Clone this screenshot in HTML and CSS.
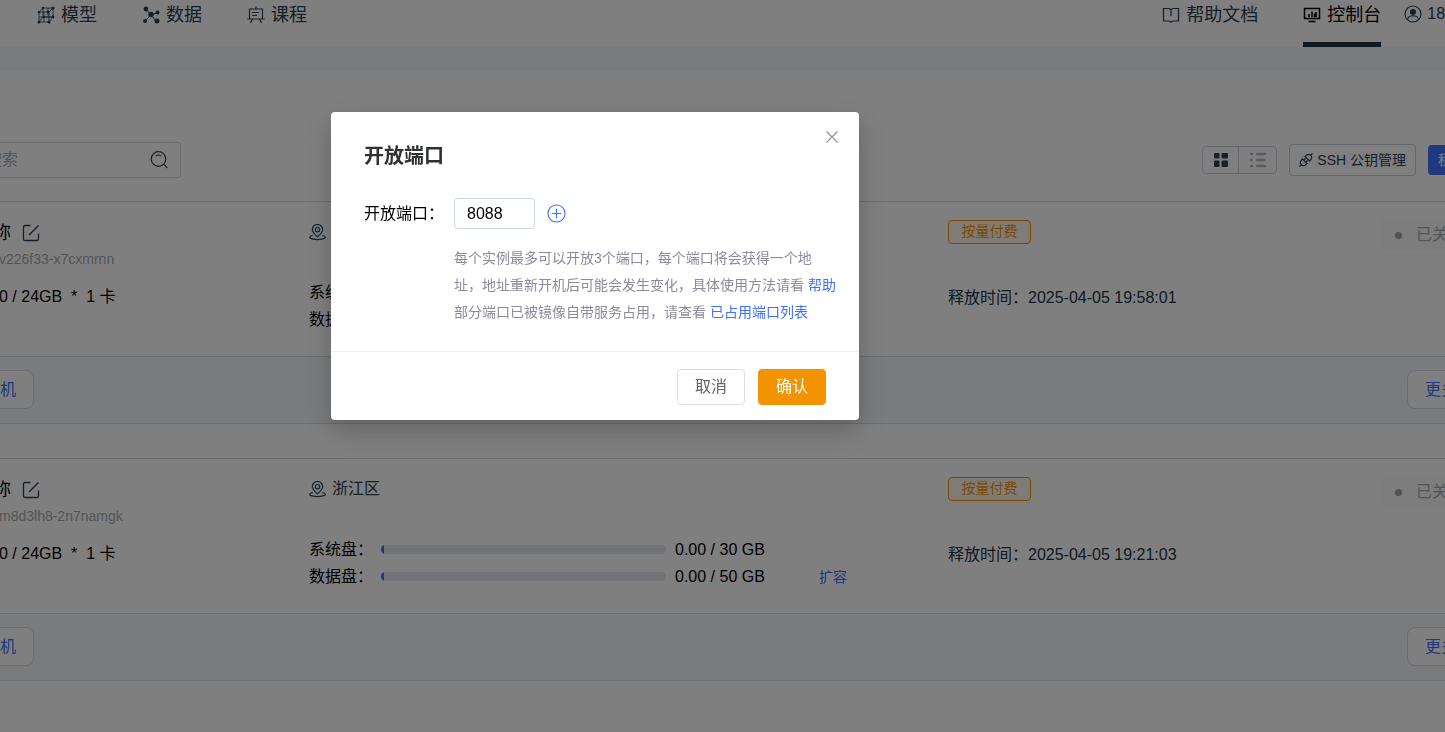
FILE: index.html
```
<!DOCTYPE html>
<html lang="zh-CN">
<head>
    <meta charset="UTF-8">
    <meta name="viewport" content="width=device-width, initial-scale=1.0">
    <title>控制台</title>
    <link rel="stylesheet" href="styles.css">
</head>
<body>
    <div class="page">
        <header class="header">
            <nav class="nav">
                <a href="#" class="nav-link">
                    <svg class="icon" viewBox="0 0 18 18"><path d="M2 6h10v10H2zM6 2h10v9H6zM2 6l4-4M12 6l4-4M2 16l4-5M12 16l4-5M2 11h14M7 6v10M11 2v9" fill="none" stroke="currentColor" stroke-width=".8"/><g fill="currentColor"><circle cx="2" cy="6" r="1.3"/><circle cx="6" cy="2" r="1.3"/><circle cx="16" cy="2" r="1.6"/><circle cx="11" cy="6" r="1.5"/><circle cx="2" cy="16" r="1.5"/><circle cx="12" cy="16" r="1.6"/><circle cx="16" cy="11" r="1.4"/><circle cx="7" cy="11" r="1.1"/></g></svg>
                    <span>模型</span>
                </a>
                <a href="#" class="nav-link">
                    <svg class="icon" viewBox="0 0 18 18"><path d="M4 3l5 6M9 9l6-2M9 9l-6 6M9 9l5 6" fill="none" stroke="currentColor"/><g fill="currentColor"><circle cx="4" cy="3" r="2.4"/><circle cx="9" cy="8.500" r="2.700"/><circle cx="15.500" cy="6.500" r="2"/><circle cx="3" cy="15" r="2"/><circle cx="15" cy="15" r="2.500"/></g></svg>
                    <span>数据</span>
                </a>
                <a href="#" class="nav-link">
                    <svg class="icon" viewBox="0 0 18 18"><path d="M2.500 13V3h13v10M.5 13h17M9 .5V3M5 6.500h7M5 9.500h5M5.500 13l-2 4M12.500 13l2 4" fill="none" stroke="currentColor" stroke-width="1.200"/></svg>
                    <span>课程</span>
                </a>
            </nav>
            <div class="header-right">
                <a href="#" class="nav-link">
                    <svg class="icon" viewBox="0 0 18 18"><path d="M1.500 2.500h5.500l2 1 2-1h5.500v12.500H11l-2 1-2-1H1.500zM9 3.500V10" fill="none" stroke="currentColor" stroke-width="1.200"/></svg>
                    <span>帮助文档</span>
                </a>
                <a href="#" class="nav-link active">
                    <svg class="icon" viewBox="0 0 18 18"><path d="M1.500 2.500h15v10h-15zM5.500 15.500h7M6 8v3M9 5.500V11M11.500 7.500V11M13 6v5" fill="none" stroke="currentColor" stroke-width="1.500"/></svg>
                    <span>控制台</span>
                </a>
                <a href="#" class="account">
                    <svg class="icon" viewBox="0 0 18 18"><circle cx="9" cy="9" r="8" fill="none" stroke="currentColor" stroke-width="1.200"/><circle cx="9" cy="7" r="3" fill="currentColor"/><path d="M3.500 14.500c1-5 10-5 11 0" fill="none" stroke="currentColor" stroke-width="1.200"/></svg>
                    <span>182</span>
                </a>
            </div>
        </header>

        <main class="main">
            <div class="toolbar">
                <div class="search">
                    <input type="text" class="search-input" placeholder="搜索" aria-label="搜索">
                    <button type="button" class="icon-btn" aria-label="搜索按钮">
                        <svg class="icon" viewBox="0 0 18 18"><circle cx="8.500" cy="8" r="7.300" fill="none" stroke="currentColor" stroke-width="1.200"/><path d="M6 5c1.500-1.200 3.500-1.200 5 0M13.800 13.300l3.500 3.700" fill="none" stroke="currentColor" stroke-width="1.200"/></svg>
                    </button>
                </div>
                <div class="tools">
                    <div class="view-switch">
                        <button type="button" class="view-btn active" aria-label="卡片视图">
                            <svg class="icon-view" viewBox="0 0 16 16"><path d="M2 1h3.500q1 0 1 1v4.500H2q-1 0-1-1V2q0-1 1-1zM9.500 1H14q1 0 1 1v3.500q0 1-1 1H9.500q-1 0-1-1V2q0-1 1-1zM2 8.500h3.500q1 0 1 1V14q0 1-1 1H2q-1 0-1-1V9.500q0-1 1-1zM9.500 8.500H14q1 0 1 1V14q0 1-1 1H9.500q-1 0-1-1V9.500q0-1 1-1z" fill="currentColor"/></svg>
                        </button>
                        <button type="button" class="view-btn" aria-label="列表视图">
                            <svg class="icon-view" viewBox="0 0 16 16"><path d="M1 2h1M7 2h8M1 8h1M7 8h8M1 14h1M7 14h8" stroke="currentColor" stroke-width="2.400" stroke-linecap="round"/></svg>
                        </button>
                    </div>
                    <button type="button" class="ssh-btn">
                        <svg class="icon-small" viewBox="0 0 14 14"><path d="M.5 13.500l2-2M11.500 2.500l2-2M3.500 6l4.500 4.500-1.500 1.500c-3 2-6.500-1.500-4.500-4.500zM6 3.500L10.500 8 12 6.500C14 3.500 10.500 0 7.500 2zM4.500 7.500l2-2M6.500 9.500l2-2" fill="none" stroke="currentColor" stroke-width="1.200"/></svg>
                        <span>SSH 公钥管理</span>
                    </button>
                    <button type="button" class="rent-btn">租用</button>
                </div>
            </div>

            <section class="card">
                <div class="card-body">
                    <div class="info">
                        <div class="name">
                            <span>名称</span>
                            <button type="button" class="icon-btn" aria-label="修改名称">
                                <svg class="icon" viewBox="0 0 18 18"><path d="M8.500 1.500H3q-1.500 0-1.500 1.500v12q0 1.500 1.500 1.500h12q1.500 0 1.500-1.500V9.500M7 11l9.500-9.500" fill="none" stroke="currentColor" stroke-width="1.300"/></svg>
                            </button>
                        </div>
                        <div class="instance-id">v226f33-x7cxmrnn</div>
                        <div class="spec">0 / 24GB &nbsp;*&nbsp; 1 卡</div>
                    </div>
                    <div class="storage">
                        <div class="region">
                            <svg class="icon-region" viewBox="0 0 18 18"><path d="M9 13.500C5.500 10.500 3.500 8.500 3.500 6a5.500 5.500 0 0 1 11 0c0 2.500-2 4.500-5.500 7.500zM4 12c-7 2.500-1.500 4.500 5 4.500s12-2 5-4.500" fill="none" stroke="currentColor" stroke-width="1.200"/><circle cx="9" cy="6" r="2.300" fill="none" stroke="currentColor" stroke-width="1.200"/></svg>
                            <span>浙江区</span>
                        </div>
                        <div class="disks">
                            <div class="disk">
                                <span class="disk-label">系统盘：</span>
                                <div class="bar"><div class="bar-fill" style="width: 1%"></div></div>
                                <span class="disk-size">0.00 / 30 GB</span>
                            </div>
                            <div class="disk">
                                <span class="disk-label">数据盘：</span>
                                <div class="bar"><div class="bar-fill" style="width: 1%"></div></div>
                                <span class="disk-size">0.00 / 50 GB</span>
                                <a href="#" class="expand">扩容</a>
                            </div>
                        </div>
                    </div>
                    <div class="billing">
                        <span class="tag">按量付费</span>
                        <div class="release">释放时间：2025-04-05 19:58:01</div>
                    </div>
                    <div class="status"><span class="dot"></span>已关机</div>
                </div>
                <div class="card-footer">
                    <button type="button" class="action-btn">开机</button>
                    <button type="button" class="action-btn more-btn">更多</button>
                </div>
            </section>

            <section class="card">
                <div class="card-body">
                    <div class="info">
                        <div class="name">
                            <span>名称</span>
                            <button type="button" class="icon-btn" aria-label="修改名称">
                                <svg class="icon" viewBox="0 0 18 18"><path d="M8.500 1.500H3q-1.500 0-1.500 1.500v12q0 1.500 1.500 1.500h12q1.500 0 1.500-1.500V9.500M7 11l9.500-9.500" fill="none" stroke="currentColor" stroke-width="1.300"/></svg>
                            </button>
                        </div>
                        <div class="instance-id">m8d3lh8-2n7namgk</div>
                        <div class="spec">0 / 24GB &nbsp;*&nbsp; 1 卡</div>
                    </div>
                    <div class="storage">
                        <div class="region">
                            <svg class="icon-region" viewBox="0 0 18 18"><path d="M9 13.500C5.500 10.500 3.500 8.500 3.500 6a5.500 5.500 0 0 1 11 0c0 2.500-2 4.500-5.500 7.500zM4 12c-7 2.500-1.500 4.500 5 4.500s12-2 5-4.500" fill="none" stroke="currentColor" stroke-width="1.200"/><circle cx="9" cy="6" r="2.300" fill="none" stroke="currentColor" stroke-width="1.200"/></svg>
                            <span>浙江区</span>
                        </div>
                        <div class="disks">
                            <div class="disk">
                                <span class="disk-label">系统盘：</span>
                                <div class="bar"><div class="bar-fill" style="width: 1%"></div></div>
                                <span class="disk-size">0.00 / 30 GB</span>
                            </div>
                            <div class="disk">
                                <span class="disk-label">数据盘：</span>
                                <div class="bar"><div class="bar-fill" style="width: 1%"></div></div>
                                <span class="disk-size">0.00 / 50 GB</span>
                                <a href="#" class="expand">扩容</a>
                            </div>
                        </div>
                    </div>
                    <div class="billing">
                        <span class="tag">按量付费</span>
                        <div class="release">释放时间：2025-04-05 19:21:03</div>
                    </div>
                    <div class="status"><span class="dot"></span>已关机</div>
                </div>
                <div class="card-footer">
                    <button type="button" class="action-btn">开机</button>
                    <button type="button" class="action-btn more-btn">更多</button>
                </div>
            </section>
        </main>
    </div>

    <div class="overlay">
        <div class="dialog" role="dialog" aria-labelledby="dialog-title">
            <div class="dialog-header">
                <h2 class="dialog-title" id="dialog-title">开放端口</h2>
                <button type="button" class="close-btn" aria-label="关闭">
                    <svg class="icon-close" viewBox="0 0 12 12"><path d="M.5.5l11 11M11.500.5l-11 11" stroke="currentColor" stroke-width="1.100"/></svg>
                </button>
            </div>
            <div class="dialog-body">
                <div class="form-row">
                    <label class="form-label" for="port">开放端口：</label>
                    <input type="text" class="port-input" id="port" value="8088">
                    <button type="button" class="add-btn" aria-label="添加端口">
                        <svg class="icon-add" viewBox="0 0 20 20"><circle cx="10" cy="10" r="9" fill="none" stroke="currentColor" stroke-width="1.200"/><path d="M10 5v10M5 10h10" stroke="currentColor" stroke-width="1.200"/></svg>
                    </button>
                </div>
                <div class="tips">
                    <div>每个实例最多可以开放3个端口，每个端口将会获得一个地</div>
                    <div><span>址，地址重新开机后可能会发生变化，具体使用方法请看</span> <a href="#">帮助</a></div>
                    <div><span>部分端口已被镜像自带服务占用，请查看</span> <a href="#">已占用端口列表</a></div>
                </div>
            </div>
            <div class="dialog-footer">
                <button type="button" class="btn">取消</button>
                <button type="button" class="btn btn-primary">确认</button>
            </div>
        </div>
    </div>
</body>
</html>
```
FILE: styles.css
```
* {
    box-sizing: border-box;
}

body {
    margin: 0;
    overflow: hidden;
    background: #fff;
    color: #000;
    font: 16px/24px "Liberation Sans", "Noto Sans CJK SC", sans-serif;
}

button,
input {
    font: inherit;
    color: inherit;
}

button {
    padding: 0;
    border: none;
    background: none;
    white-space: nowrap;
    cursor: pointer;
}

a {
    color: #4070ff;
    text-decoration: none;
}

svg {
    display: block;
    flex: none;
}

.icon {
    width: 18px;
    height: 18px;
}

/* страница шире окна с обеих сторон */
.page {
    min-height: 100vh;
    margin: 0 -60px 0 -40px;
}

.header {
    display: flex;
    justify-content: space-between;
    height: 47px;
    padding: 0 51px 0 77px;
}

.nav {
    display: flex;
    gap: 45px;
}

.header-right {
    display: flex;
}

.nav-link,
.account {
    display: flex;
    align-items: center;
    gap: 6px;
    height: 47px;
    padding-bottom: 17px;
    color: #2c3e50;
    font-size: 18px;
}

.header-right .nav-link {
    margin-right: 45px;
}

.header-right .active {
    margin-right: 23px;
    padding-bottom: 12px;
    border-bottom: 5px solid #213547;
    color: #000;
}

.account {
    gap: 5px;
    padding-bottom: 19px;
    font-size: 16px;
}

.main {
    padding-top: 71px;
    border-top: 24px solid #f4f6fa;
}

.toolbar {
    display: flex;
    align-items: center;
    justify-content: space-between;
    margin-bottom: 23px;
}

.search {
    display: flex;
    align-items: center;
    width: 221px;
    height: 36px;
    padding: 0 12px 0 26px;
    border: 1px solid #d6dae6;
    border-left: none;
    border-radius: 4px;
}

.search-input {
    flex: 1;
    min-width: 0;
    padding: 0;
    border: none;
    outline: none;
    background: none;
}

    .search-input::placeholder {
        color: #a8abb2;
    }

.icon-btn {
    color: #2c3e50;
}

.tools {
    display: flex;
    align-items: center;
    gap: 12px;
    font-size: 14px;
}

.view-switch {
    display: flex;
    height: 28px;
    border: 1px solid #c9ced9;
    border-radius: 4px;
}

.view-btn {
    display: flex;
    align-items: center;
    justify-content: center;
    width: 37px;
    color: #b4b7be;
}

    .view-btn.active {
        width: 36px;
        border-right: 1px solid #c9ced9;
        color: #33404f;
    }

.icon-view {
    width: 16px;
    height: 16px;
}

.ssh-btn {
    display: flex;
    align-items: center;
    gap: 4px;
    height: 32px;
    padding: 0 9px;
    border: 1px solid #c9ced9;
    border-radius: 4px;
    color: #33404f;
}

.icon-small {
    width: 14px;
    height: 14px;
}

.rent-btn {
    width: 77px;
    height: 30px;
    padding-left: 10px;
    border-radius: 4px;
    background: #4070ff;
    color: #fff;
    text-align: left;
}

.card {
    margin-bottom: 34px;
    border-top: 1px solid #d6dae6;
    border-bottom: 1px solid #d6dae6;
}

.card-body {
    display: grid;
    grid-template-columns: 334fr 639fr 434fr 123fr;
    height: 154px;
    padding: 18px 0 0 15px;
    white-space: nowrap;
}

.name {
    display: flex;
    align-items: center;
    gap: 11px;
    margin-top: 1px;
    font-size: 18px;
}

.instance-id {
    margin-top: 4px;
    padding-left: 24px;
    color: #a8a8a8;
    font-size: 14px;
    line-height: 20px;
}

.spec {
    margin-top: 16px;
    padding-left: 24px;
}

.region {
    display: flex;
    align-items: center;
    gap: 6px;
    color: #2c3e50;
}

.icon-region {
    width: 17px;
    height: 17px;
}

.disks {
    margin-top: 35px;
}

.disk {
    display: flex;
    align-items: center;
    height: 27px;
}

.disk-label {
    width: 72px;
}

.bar {
    flex: 0 1 285px;
    height: 9px;
    margin-right: 9px;
    overflow: hidden;
    border-radius: 5px;
    background: #e4e7ed;
}

.bar-fill {
    height: 100%;
    background: #4070ff;
}

.disk-size {
    width: 144px;
}

.expand {
    font-size: 14px;
}

.tag {
    display: block;
    width: 83px;
    height: 24px;
    border: 1px solid #f49300;
    border-radius: 4px;
    background: #fff9f0;
    color: #f49300;
    font-size: 14px;
    line-height: 21px;
    text-align: center;
}

.release {
    margin-top: 42px;
    color: #213547;
}

.status {
    display: flex;
    align-items: center;
    gap: 14px;
    height: 30px;
    padding-left: 13px;
    background: #fafafa;
    color: #a8abb2;
}

.dot {
    width: 7px;
    height: 7px;
    border-radius: 50%;
    background: #a0a4ac;
}

.card-footer {
    display: flex;
    align-items: center;
    justify-content: space-between;
    height: 67px;
    padding: 0 0 1px 6px;
    border-top: 1px solid #d6dae6;
    background: #f4f6fa;
}

.action-btn {
    height: 39px;
    padding: 0 17px;
    border: 1px solid #d6dae6;
    border-radius: 8px;
    background: #fff;
    color: #4070ff;
}

.more-btn {
    width: 98px;
    text-align: left;
}

/* 弹窗 */
.overlay {
    position: fixed;
    inset: 0;
    padding: 112px 0 0 331px;
    background: rgba(0, 0, 0, .5);
}

.dialog {
    width: 528px;
    border-radius: 4px;
    background: #fff;
    box-shadow: 0 12px 32px 4px rgba(0, 0, 0, .1), 0 8px 20px rgba(0, 0, 0, .12);
}

.dialog-header {
    display: flex;
    justify-content: space-between;
    padding: 19px 21px 0 33px;
}

.dialog-title {
    margin: 13px 0 0;
    color: #303133;
    font-size: 20px;
    line-height: 24px;
}

.close-btn {
    height: 12px;
    color: #909399;
}

.icon-close {
    width: 12px;
    height: 12px;
}

.dialog-body {
    padding: 30px 16px 25px 33px;
}

.form-row {
    display: flex;
    align-items: center;
}

.form-label {
    width: 90px;
}

.port-input {
    width: 81px;
    height: 31px;
    margin-right: 12px;
    padding: 0 12px;
    border: 1px solid #cdd7e0;
    border-radius: 4px;
}

.add-btn {
    color: #4070ff;
}

.icon-add {
    width: 19px;
    height: 19px;
}

.tips {
    margin: 16px 0 0 90px;
    color: #8d8a9b;
    font-size: 14px;
    line-height: 27px;
    white-space: nowrap;
}

.dialog-footer {
    display: flex;
    justify-content: flex-end;
    gap: 13px;
    padding: 17px 33px 15px;
    border-top: 1px solid #ebeef5;
}

.btn {
    height: 36px;
    padding: 0 17px;
    border: 1px solid #dcdfe6;
    border-radius: 4px;
    color: #606266;
}

.btn-primary {
    border-color: #f49300;
    background: #f49300;
    color: #fff;
}
```
